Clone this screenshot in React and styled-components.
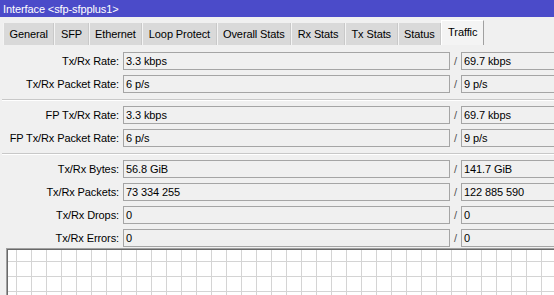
import * as React from "react"
import styled, { createGlobalStyle } from 'styled-components';

const GlobalStyle = createGlobalStyle`
  html, body {
    margin: 0;
    padding: 0;
    background: #f0f0f0;
    overflow: hidden;
  }
  body {
    font-family: "Liberation Sans", Arial, sans-serif;
    font-size: 11px;
    letter-spacing: -0.1px;
    color: #000;
  }
`;

const Window = styled.div`
  width: 554px;
  height: 295px;
  overflow: hidden;
  background: #f0f0f0;
`;

const TitleBar = styled.div`
  height: 17px;
  background: #4b4bc9;
  color: #fff;
  display: flex;
  align-items: center;
  padding-left: 3px;
  white-space: nowrap;
`;

const TabBar = styled.div`
  display: flex;
  align-items: flex-end;
  height: 25px;
  margin-top: 3px;
  padding-left: 3px;
`;

const Tab = styled.div`
  box-sizing: border-box;
  height: ${p => (p.$active ? '25px' : '22px')};
  padding: ${p => (p.$active ? '0 6px 3px' : '0 5.5px')};
  display: flex;
  align-items: center;
  white-space: nowrap;
  background: ${p => (p.$active ? '#f4f4f4' : '#d9d9d9')};
  border-left: 1px solid ${p => (p.$active ? '#ffffff' : '#f4f4f4')};
  border-top: ${p => (p.$active ? '1px solid #ffffff' : 'none')};
  border-right: 1px solid ${p => (p.$active ? '#a0a0a0' : '#c9c9c9')};
`;

const Panel = styled.div`
  padding-top: 7px;
  width: 800px;
`;

const Group = styled.div`
  display: flex;
  flex-direction: column;
  gap: 5px;
`;

const Separator = styled.div`
  margin: 6px 0 5px 2px;
  border-top: 1px solid #c8c8c8;
  border-bottom: 1px solid #ffffff;
`;

const Row = styled.div`
  display: flex;
  align-items: center;
  height: 18px;
`;

const Label = styled.div`
  width: 119px;
  margin-right: 4px;
  text-align: right;
  white-space: nowrap;
`;

const Field = styled.div`
  box-sizing: border-box;
  width: 327px;
  height: 18px;
  border: 1px solid #a5a5a5;
  background: #f0f0f0;
  padding-left: 2px;
  display: flex;
  align-items: center;
  white-space: nowrap;
`;

const Slash = styled.div`
  width: 11px;
  text-align: center;
  color: #555;
`;

const Graph = styled.div`
  margin: 1px 0 0 6px;
  height: 80px;
  border: 1px solid;
  border-color: #a0a0a0 #ffffff #ffffff #a0a0a0;
  box-shadow: inset 1px 1px 0 #696969;
  background-color: #ffffff;
  background-image:
    linear-gradient(to right, #d4d4d4 1px, transparent 1px),
    linear-gradient(to bottom, #d4d4d4 1px, transparent 1px);
  background-size: 15px 15px;
  background-position: 9px 12px;
`;

const tabs = ['General', 'SFP', 'Ethernet', 'Loop Protect', 'Overall Stats', 'Rx Stats', 'Tx Stats', 'Status', 'Traffic'];

const groups = [
  [
    ['Tx/Rx Rate:', '3.3 kbps', '69.7 kbps'],
    ['Tx/Rx Packet Rate:', '6 p/s', '9 p/s'],
  ],
  [
    ['FP Tx/Rx Rate:', '3.3 kbps', '69.7 kbps'],
    ['FP Tx/Rx Packet Rate:', '6 p/s', '9 p/s'],
  ],
  [
    ['Tx/Rx Bytes:', '56.8 GiB', '141.7 GiB'],
    ['Tx/Rx Packets:', '73 334 255', '122 885 590'],
    ['Tx/Rx Drops:', '0', '0'],
    ['Tx/Rx Errors:', '0', '0'],
  ],
];

export default function App() {
  return (
    <Window>
      <GlobalStyle />
      <TitleBar>Interface &lt;sfp-sfpplus1&gt;</TitleBar>
      <TabBar>
        {tabs.map(t => (
          <Tab key={t} $active={t === 'Traffic'}>{t}</Tab>
        ))}
      </TabBar>
      <Panel>
        {groups.map((rows, i) => (
          <React.Fragment key={i}>
            {i > 0 && <Separator />}
            <Group>
              {rows.map(([label, tx, rx]) => (
                <Row key={label}>
                  <Label>{label}</Label>
                  <Field>{tx}</Field>
                  <Slash>/</Slash>
                  <Field>{rx}</Field>
                </Row>
              ))}
            </Group>
          </React.Fragment>
        ))}
        <Graph />
      </Panel>
    </Window>
  );
}
